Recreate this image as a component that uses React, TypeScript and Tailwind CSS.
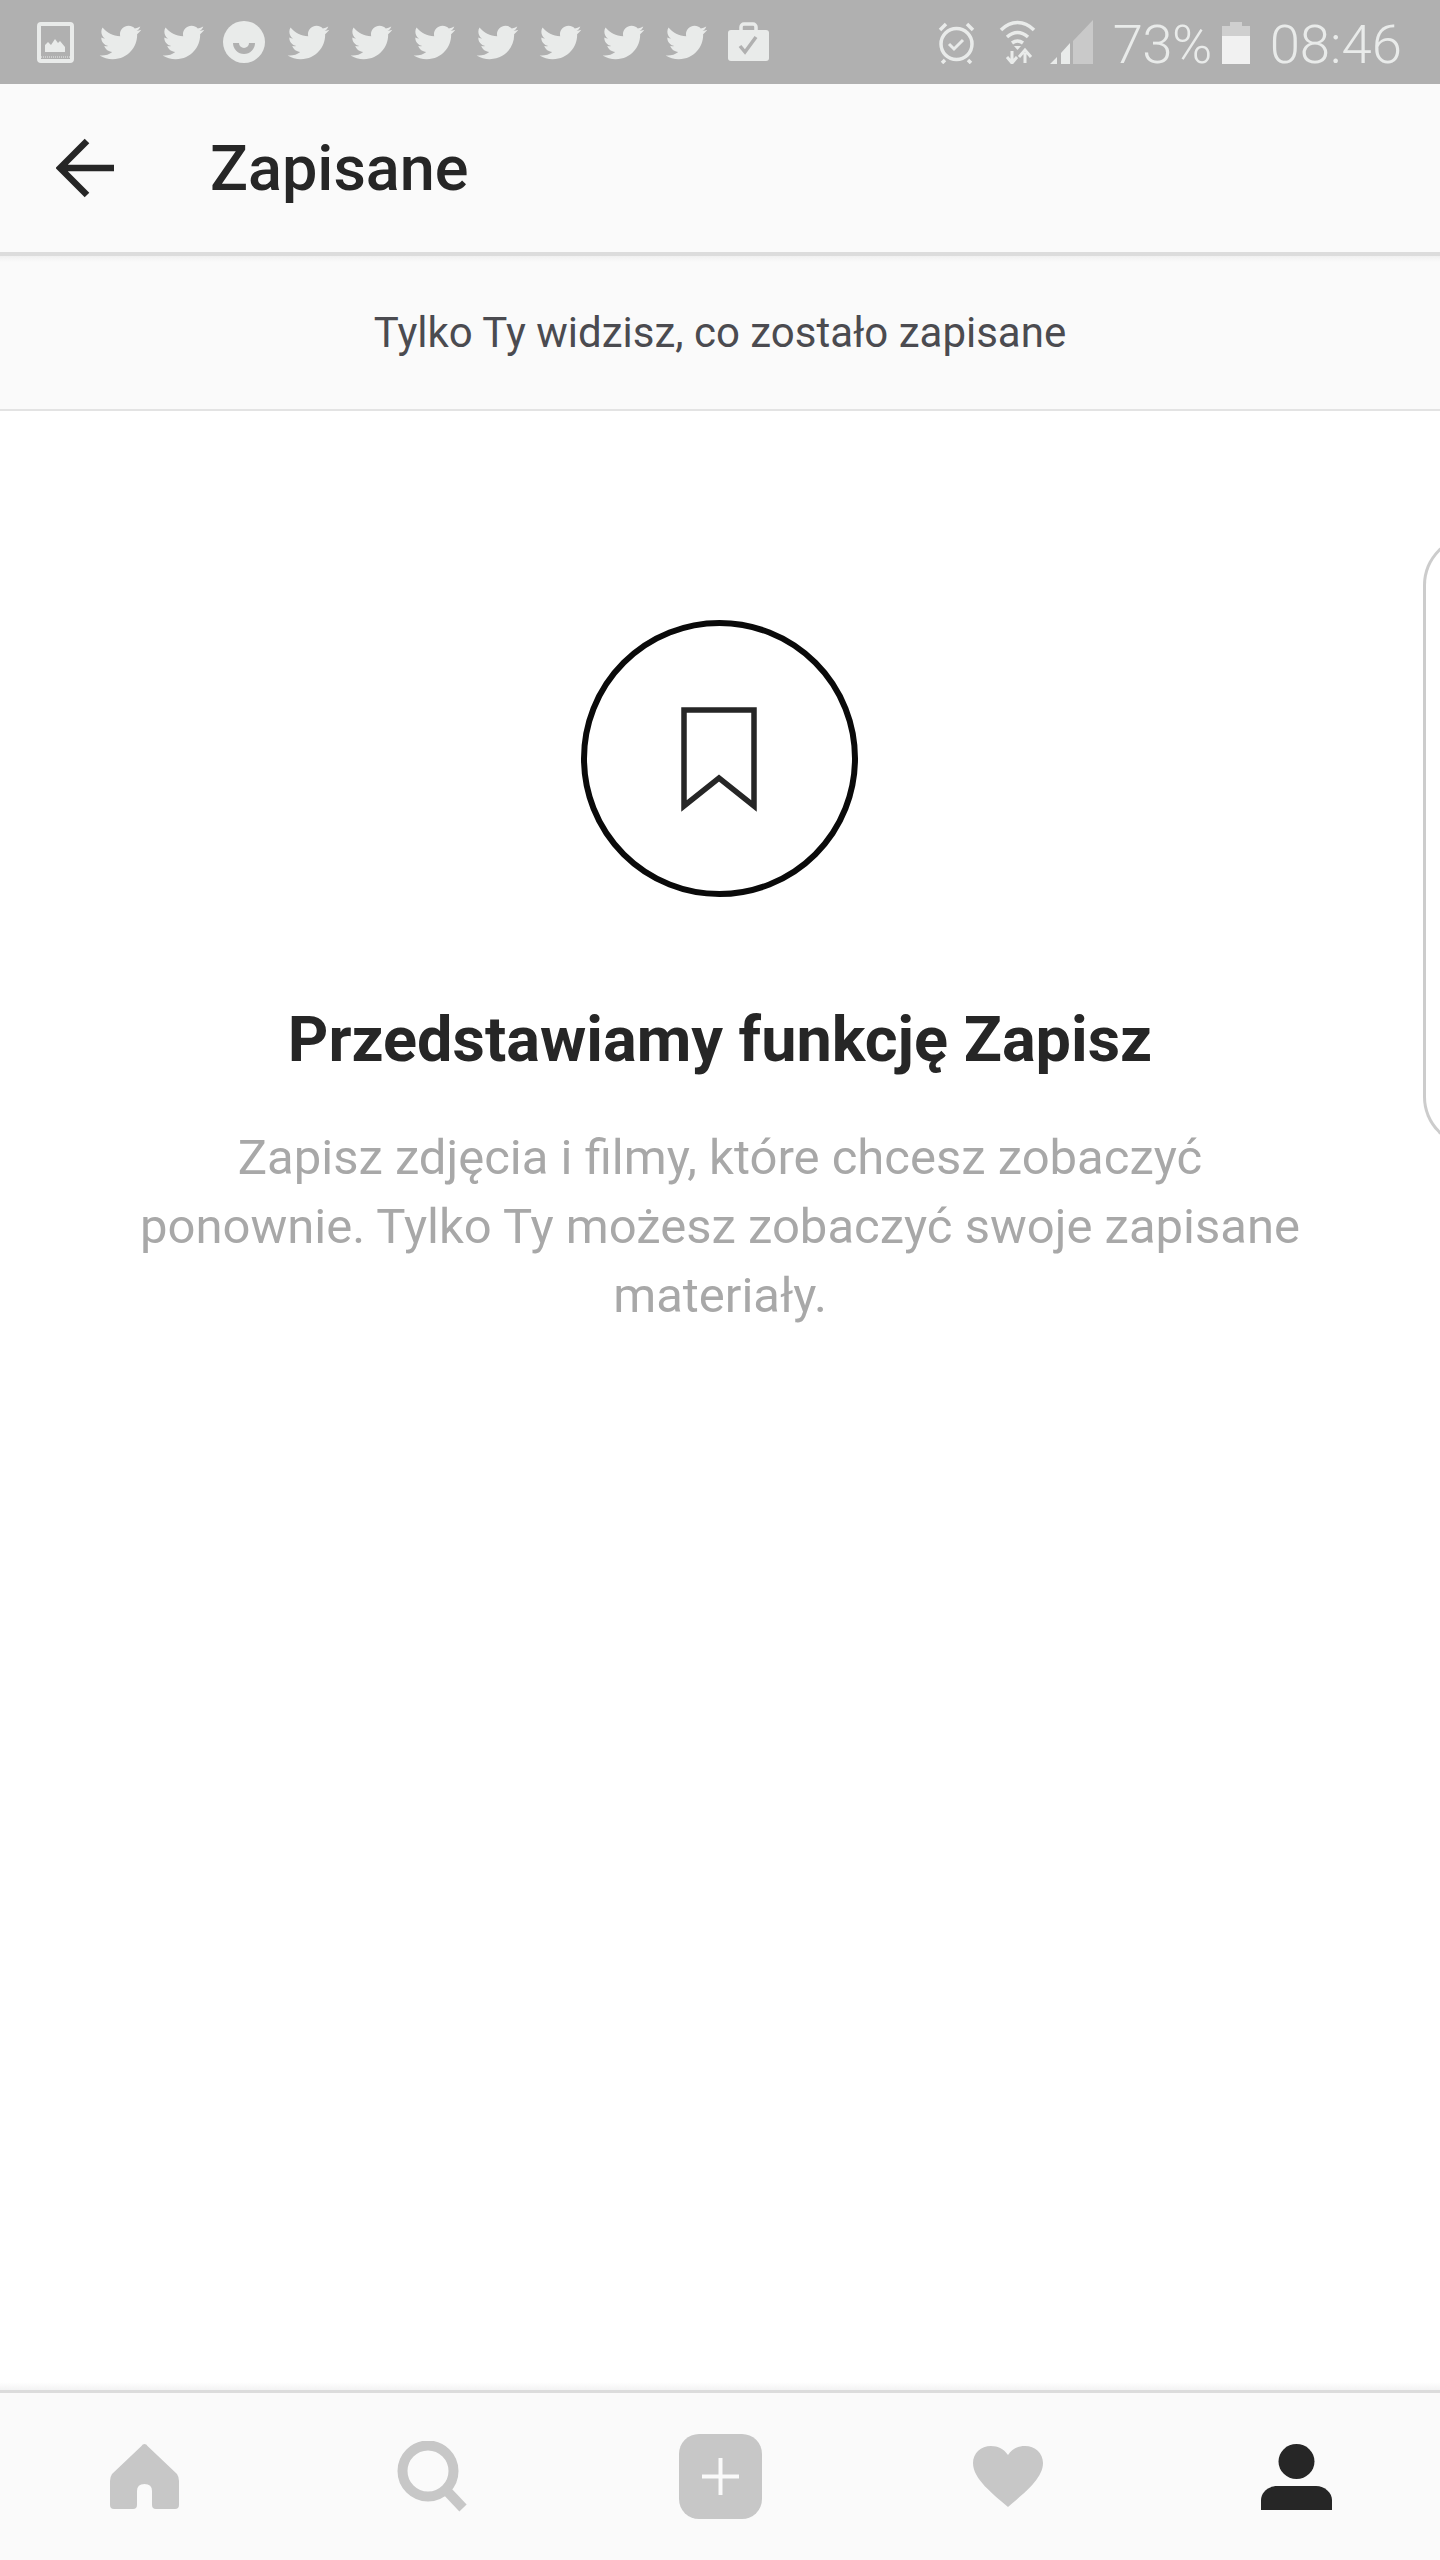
import { FaTwitter } from "react-icons/fa";

const light = "#e9ebea";

function Bird() {
  return <FaTwitter className="w-[41px] h-[41px] shrink-0 text-[#e9ebea] scale-x-[1.02]" />;
}

function StatusLeft() {
  return (
    <div className="flex items-center">
      <svg width="37" height="41" viewBox="0 0 37 41" fill="none" className="shrink-0 mr-[26px]">
        <rect x="2" y="2" width="33" height="37" rx="2" stroke={light} strokeWidth="4" />
        <path d="M8 30v-7l3-3 3 3 4-6 3 4 2-2 5 6v5z" fill={light} />
        <path d="M4 35h29" stroke={light} strokeWidth="1" strokeDasharray="1 1" />
      </svg>
      <div className="flex items-center gap-[22px]">
        <Bird />
        <Bird />
      </div>
      <svg width="42" height="42" viewBox="0 0 42 42" className="shrink-0 ml-[19px] mr-[23px]">
        <circle cx="21" cy="21" r="21" fill={light} />
        <path d="M10 22a11 11 0 0 0 22 0h-6a5 5 0 0 1-10 0z" fill="#b0b0b0" />
      </svg>
      <div className="flex items-center gap-[22px]">
        <Bird />
        <Bird />
        <Bird />
        <Bird />
        <Bird />
        <Bird />
        <Bird />
      </div>
      <svg width="41" height="40" viewBox="0 0 41 40" className="shrink-0 ml-[21px]">
        <path d="M13 9V5a3 3 0 0 1 3-3h9a3 3 0 0 1 3 3v4" fill="none" stroke={light} strokeWidth="3.5" />
        <rect x="0" y="8" width="41" height="31" rx="3" fill={light} />
        <path d="M12 24l5 6 11-15" fill="none" stroke="#b0b0b0" strokeWidth="3.5" />
      </svg>
    </div>
  );
}

function StatusRight() {
  return (
    <div className="flex items-center text-[#e9ebea] text-[54.500px] leading-none font-light">
      <svg width="37" height="43" viewBox="0 0 37 43" fill="none" stroke={light} className="shrink-0 mr-[24px]">
        <circle cx="18.5" cy="23" r="15.5" strokeWidth="3.5" />
        <path d="M11 23l5 5 9-9" strokeWidth="3" />
        <path d="M2 9l6-6M35 9l-6-6M7 39l-3 3M30 39l3 3" strokeWidth="3.5" />
      </svg>
      <svg width="37" height="44" viewBox="0 0 37 44" fill="none" stroke={light} className="shrink-0 mr-[14px]">
        <path d="M2 10c10-10 23-10 33 0M8 17c7-6 14-6 21 0M13 23c4-3 7-3 11 0" strokeWidth="3.5" />
        <path d="M15 26l3.500 4 3.500-4z" fill={light} stroke="none" />
        <path d="M13 31v10M8 37l5 6 5-6" strokeWidth="3" />
        <path d="M26 43V33M20 37l6-7 6 7" strokeWidth="3" />
      </svg>
      <svg width="43" height="44" viewBox="0 0 43 44" className="shrink-0 mr-[20px]">
        <path d="M23 44V21L43 0v44z" fill="#c9c9c9" />
        <path d="M0 44l7-7v7zM11 44V33l9-10v21z" fill={light} />
      </svg>
      <span className="w-[96px] shrink-0 mr-[13px] mt-[4px] whitespace-nowrap tracking-[-0.5px]">73%</span>
      <div className="flex flex-col items-center shrink-0 w-[28px] mr-[20px] mt-[2px]">
        <div className="w-[12px] h-[4px] bg-[#cfcfcf]" />
        <div className="w-[28px] h-[10px] bg-[#cfcfcf]" />
        <div className="w-[28px] h-[28px] bg-[#f1f1f1]" />
      </div>
      <span className="whitespace-nowrap mt-[4px]">08:46</span>
    </div>
  );
}

function NavHome() {
  return (
    <svg width="69" height="65" viewBox="0 0 69 65">
      <path
        d="M34.500 0q2 0 3 2L67 30q2 3 2 7v24q0 4-4 4H46q-4 0-4-4V47q0-7-7.500-7T27 47v14q0 4-4 4H4q-4 0-4-4V37q0-4 2-7L31.500 2q1-2 3-2z"
        fill="#c7c7c7"
      />
    </svg>
  );
}

function NavSearch() {
  return (
    <svg width="70" height="71" viewBox="0 0 70 71" fill="none" stroke="#c7c7c7">
      <circle cx="31" cy="30" r="25.500" strokeWidth="10" />
      <path d="M49 49l17 18" strokeWidth="10" />
    </svg>
  );
}

function NavPlus() {
  return (
    <div className="w-[83px] h-[85px] rounded-[20px] bg-[#c7c7c7] flex items-center justify-center">
      <svg width="37" height="37" viewBox="0 0 37 37" stroke="#fafafa" strokeWidth="4">
        <path d="M18.500 0v37M0 18.500h37" />
      </svg>
    </div>
  );
}

function NavHeart() {
  return (
    <svg width="70" height="61" viewBox="0 0 70 61">
      <path d="M35 61C20 48 0 33 0 17 0 7 8 0 18 0c7 0 13 3 17 9 4-6 10-9 17-9 10 0 18 7 18 17 0 16-20 31-35 44z" fill="#c7c7c7" />
    </svg>
  );
}

function NavPerson() {
  return (
    <svg width="71" height="66" viewBox="0 0 71 66" fill="#262626">
      <ellipse cx="35.500" cy="17.500" rx="18" ry="17.500" />
      <path d="M0 66V56C0 49 7 42 16 42h39c9 0 16 7 16 14v10z" />
    </svg>
  );
}

export default function App() {
  return (
    <div className="w-[1440px] h-[2560px] flex flex-col bg-white overflow-hidden font-['Roboto',sans-serif]">
      <div className="h-[84px] shrink-0 bg-[#b0b0b0] flex items-center justify-between pl-[37px] pr-[38px]">
        <StatusLeft />
        <StatusRight />
      </div>

      <div className="h-[172px] shrink-0 bg-[#fafafa] border-b-4 border-[#dcdcdc] flex items-center pl-[56px]">
        <svg width="58" height="60" viewBox="0 0 58 60" fill="none" stroke="#262626" strokeWidth="6.500" className="shrink-0">
          <path d="M58 30H4M31 3L4 30l27 27" />
        </svg>
        <h1 className="ml-[96px] text-[63px] leading-none font-medium text-[#262626]">Zapisane</h1>
      </div>

      <div className="h-[155px] shrink-0 bg-[#fafafa] border-b-2 border-[#e3e3e3] flex flex-col">
        <div className="h-[6px] shrink-0 bg-gradient-to-b from-[#f0f0f0] to-[#fafafa]" />
        <p className="flex-1 flex items-center justify-center text-[42px] leading-none text-[#4b4b50] pb-[6px]">
          Tylko Ty widzisz, co zostało zapisane
        </p>
      </div>

      <main className="relative flex-1 flex flex-col items-center pt-[209px]">
        <div className="w-[277px] h-[277px] -ml-[1px] rounded-full border-[6px] border-[#0a0a0a] flex items-center justify-center">
          <svg width="76" height="105" viewBox="0 0 76 105" fill="none" stroke="#262626" strokeWidth="5.500" className="mt-[2px] -ml-[1px]">
            <path d="M3 3h70v96L38 71 3 99z" strokeLinejoin="miter" />
          </svg>
        </div>
        <h2 className="mt-[109px] text-[63px] leading-[68px] font-bold text-[#262626] whitespace-nowrap">
          Przedstawiamy funkcję Zapisz
        </h2>
        <p className="mt-[49px] w-[1200px] text-center text-[49px] leading-[69px] text-[#a8a8a8]">
          Zapisz zdjęcia i filmy, które chcesz zobaczyć
          <br />
          ponownie. Tylko Ty możesz zobaczyć swoje zapisane
          <br />
          materiały.
        </p>
        <div className="absolute -right-[33px] top-[124px] w-[50px] h-[612px] rounded-l-[50px] border-[3px] border-[#cccccc]" />
      </main>

      <footer className="h-[178px] shrink-0 flex flex-col">
        <div className="h-[8px] shrink-0 bg-gradient-to-b from-white to-[#f3f3f3]" />
        <div className="flex-1 grid grid-cols-5 items-center bg-[#fafafa] border-t-[3px] border-[#dcdcdc]">
          <div className="flex justify-center"><NavHome /></div>
          <div className="flex justify-center"><NavSearch /></div>
          <div className="flex justify-center"><NavPlus /></div>
          <div className="flex justify-center"><NavHeart /></div>
          <div className="flex justify-center"><NavPerson /></div>
        </div>
      </footer>
    </div>
  );
}
